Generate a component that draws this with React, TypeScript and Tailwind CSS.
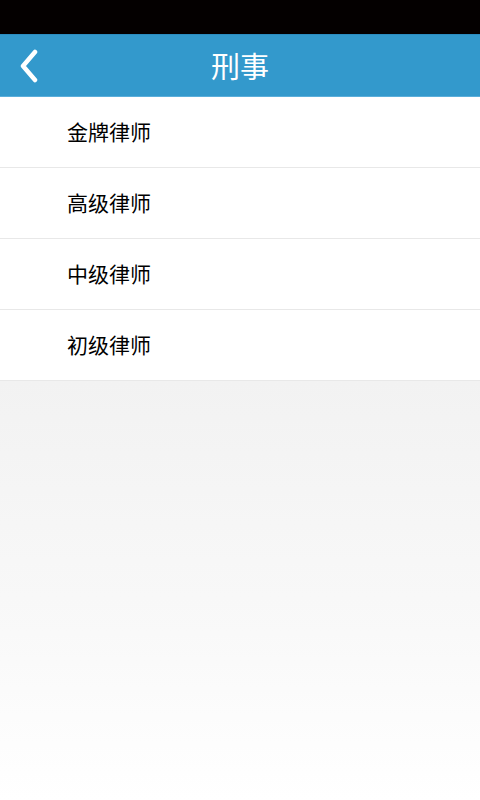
const items = ["金牌律师", "高级律师", "中级律师", "初级律师"];

export default function App() {
  return (
    <div
      className="flex h-[800px] w-[480px] flex-col bg-white"
      style={{ fontFamily: '"Noto Sans CJK SC", "Noto Sans", sans-serif' }}
    >
      {/* status bar */}
      <div className="h-[34px] shrink-0 bg-[#040000]" />

      {/* title bar */}
      <div className="relative flex h-[63px] shrink-0 items-center justify-center border-t border-[#2b8cc0] border-b border-b-[#5aaedb] bg-[#3399cc]">
        <button className="absolute left-[18px] top-1/2 -translate-y-1/2 p-0">
          <svg width="24" height="34" viewBox="0 0 24 34" fill="none">
            <path
              d="M17 3 L5 17 L17 31"
              stroke="white"
              strokeWidth="4.5"
              strokeLinecap="round"
              strokeLinejoin="round"
            />
          </svg>
        </button>
        <span className="text-[29px] leading-none text-white">刑事</span>
      </div>

      {/* list */}
      <ul className="shrink-0 bg-white">
        {items.map((t) => (
          <li
            key={t}
            className="flex h-[71px] items-center border-b border-[#e8e8e8] pl-[67px] text-[21px] text-black"
          >
            {t}
          </li>
        ))}
      </ul>

      {/* empty area */}
      <div className="flex-1 bg-gradient-to-b from-[#f2f2f2] via-[#f9f9f9] via-60% to-white" />
    </div>
  );
}
